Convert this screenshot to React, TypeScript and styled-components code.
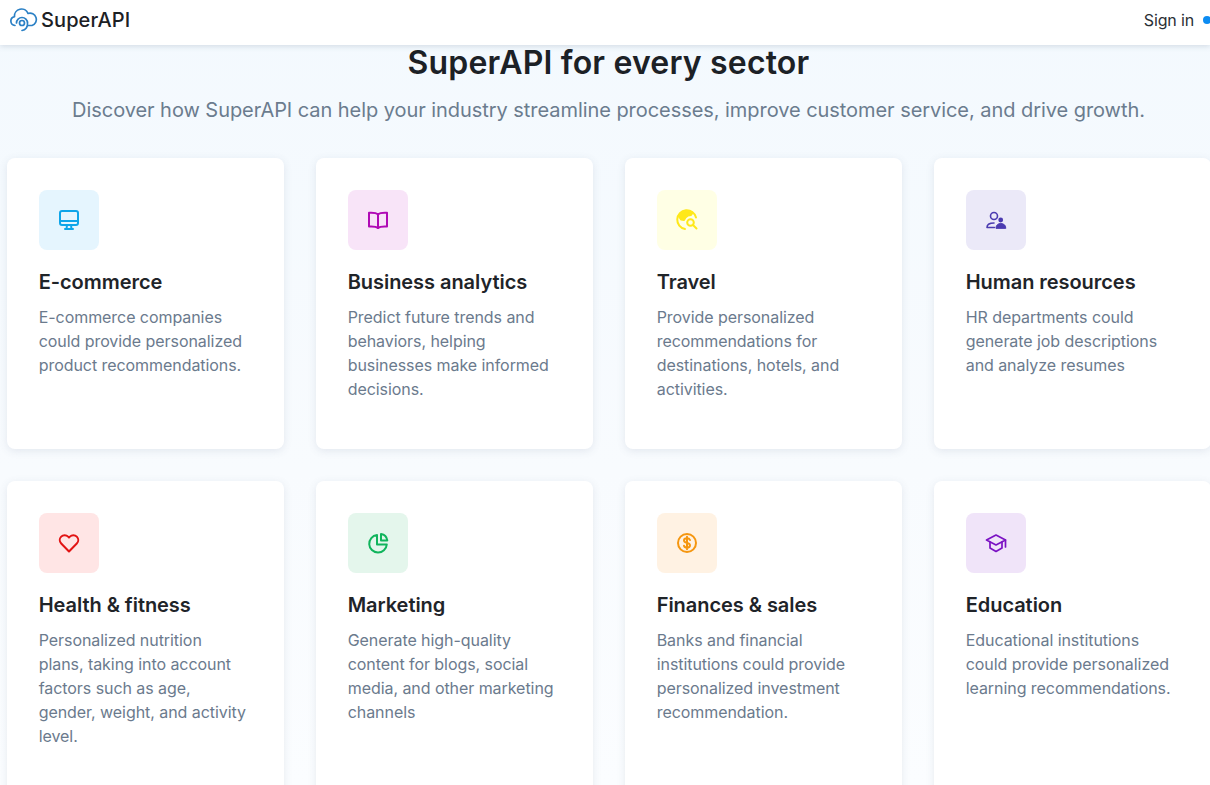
import { ReactNode } from 'react';
import styled, { createGlobalStyle } from 'styled-components';

const GlobalStyle = createGlobalStyle`
  html, body {
    margin: 0;
    padding: 0;
    height: 100%;
    overflow: hidden;
    background: #fff;
    font-family: Inter, "Liberation Sans", sans-serif;
  }
`;

const Page = styled.div`
  width: 1210px;
  height: 785px;
  overflow: hidden;
  display: flex;
  flex-direction: column;
  background: linear-gradient(180deg, #f3f9fe 0%, #f8fbfe 60%, #fbfdff 100%);
`;

const Header = styled.header`
  flex: none;
  height: 45px;
  display: flex;
  align-items: center;
  justify-content: space-between;
  padding: 0 0 0 10px;
  background: #fff;
  box-shadow: 0 1px 6px rgba(60, 80, 110, 0.2);
  position: relative;
  z-index: 1;
`;

const Brand = styled.div`
  display: flex;
  align-items: center;
  gap: 3px;
  margin-top: -5px;
  font-size: 20px;
  font-weight: 500;
  letter-spacing: 0.1px;
  color: #1c2024;
`;

const SignIn = styled.div`
  display: flex;
  align-items: center;
  gap: 9px;
  margin-right: -1px;
  margin-top: -5px;
  font-size: 16px;
  letter-spacing: -0.15px;
  color: #2a2f35;
`;

const Dot = styled.span`
  width: 8px;
  height: 8px;
  border-radius: 50%;
  background: #0d8cf2;
`;

const Title = styled.h1`
  margin: 1px 0 0;
  width: 1217px;
  text-align: center;
  font-size: 32px;
  line-height: 34px;
  font-weight: 600;
  letter-spacing: 0.18px;
  color: #1c2126;
`;

const Subtitle = styled.p`
  margin: 15px 0 0;
  width: 1217px;
  text-align: center;
  font-size: 20px;
  line-height: 30px;
  letter-spacing: -0.055px;
  color: #6b7c8e;
`;

const Grid = styled.div`
  display: grid;
  grid-template-columns: repeat(4, 277px);
  gap: 32px;
  margin: 33px 0 0 7px;
`;

const Card = styled.article`
  box-sizing: border-box;
  padding: 32px 34px 48px 32px;
  background: #fff;
  border-radius: 8px;
  box-shadow: 0 2px 8px rgba(70, 90, 120, 0.12);
`;

const IconBox = styled.div<{ $bg: string; $fg: string }>`
  width: 60px;
  height: 60px;
  border-radius: 8px;
  display: flex;
  align-items: center;
  justify-content: center;
  background: ${(p) => p.$bg};
  color: ${(p) => p.$fg};
`;

const CardTitle = styled.h3`
  margin: 18px 0 0 -0.3px;
  font-size: 20px;
  line-height: 28px;
  font-weight: 600;
  letter-spacing: -0.05px;
  color: #1f2429;
`;

const CardText = styled.p`
  margin: 9px 0 0 -0.3px;
  font-size: 16px;
  line-height: 24px;
  letter-spacing: -0.06px;
  color: #6b7a8d;
`;

const Glyph = ({ children, weight = 2 }: { children: ReactNode; weight?: number }) => (
  <svg width="24" height="24" viewBox="0 0 24 24" fill="none" stroke="currentColor" strokeWidth={weight} strokeLinecap="round" strokeLinejoin="round">
    {children}
  </svg>
);

const Logo = () => (
  <svg width="28" height="26" viewBox="0 0 28 26" fill="none" stroke="#2b80c5" strokeWidth="1.7" strokeLinecap="round" strokeLinejoin="round">
    <path d="M5 18.500A4.500 4.500 0 0 1 4.500 9.600 7 7 0 0 1 18 6.500 6 6 0 0 1 22 18.500H18.500" />
    <path d="M6.500 16a5.500 5.500 0 0 1 11 0 6.500 6.500 0 0 1-5.500 7.500" />
    <circle cx="12" cy="16" r="2.500" />
  </svg>
);

const sectors: { title: string; text: string; bg: string; fg: string; icon: ReactNode }[] = [
  {
    title: 'E-commerce',
    text: 'E-commerce companies could provide personalized product recommendations.',
    bg: '#e5f5fe',
    fg: '#0ea5e9',
    icon: (
      <Glyph>
        <rect x="3" y="3" width="18" height="14" rx="2" />
        <path d="M3 13h18M10 17l-.5 4M14 17l.5 4M8 21h8" />
      </Glyph>
    ),
  },
  {
    title: 'Business analytics',
    text: 'Predict future trends and behaviors, helping businesses make informed decisions.',
    bg: '#f8e4f8',
    fg: '#b00ab5',
    icon: (
      <Glyph>
        <path d="M12 6.500C10.500 5 8 4.500 3 4.800V18.500c5-.3 7.500.2 9 1.500 1.500-1.300 4-1.800 9-1.500V4.800C16 4.500 13.500 5 12 6.500Z" />
        <path d="M12 6.500V20" />
      </Glyph>
    ),
  },
  {
    title: 'Travel',
    text: 'Provide personalized recommendations for destinations, hotels, and activities.',
    bg: '#ffffe5',
    fg: '#ffe81a',
    icon: (
      <Glyph>
        <path d="M21 9.500A9.500 9.500 0 1 0 10 21" />
        <path fill="currentColor" d="M4 7.500 9 3.500c3-.8 6-.5 8.500 1.500L16 7l-3 .5-2.500 2L9 12l-3-.5L4.500 9Z" />
        <circle cx="15.500" cy="14.500" r="3.300" />
        <path d="m18 17 3.500 3.500" />
      </Glyph>
    ),
  },
  {
    title: 'Human resources',
    text: 'HR departments could generate job descriptions and analyze resumes',
    bg: '#ebe9f8',
    fg: '#4b3bb0',
    icon: (
      <Glyph weight={1.6}>
        <circle cx="10" cy="8" r="3.500" />
        <path d="M3 19.500c0-2.800 3-4.500 7-4.500M3 19.500h7.500" />
        <circle cx="16.700" cy="12" r="1.600" fill="currentColor" />
        <path fill="currentColor" strokeWidth="1" d="M12 20c0-2.800 2-4.500 4.800-4.500s5 1.700 5 4.500Z" />
      </Glyph>
    ),
  },
  {
    title: 'Health & fitness',
    text: 'Personalized nutrition plans, taking into account factors such as age, gender, weight, and activity level.',
    bg: '#ffe5e5',
    fg: '#e21414',
    icon: (
      <Glyph>
        <path d="M12 20.500 4.200 12.500a4.900 4.900 0 0 1 0-6.900 4.800 4.800 0 0 1 6.900 0l.9.900.9-.9a4.800 4.800 0 0 1 6.900 0 4.900 4.900 0 0 1 0 6.900Z" />
      </Glyph>
    ),
  },
  {
    title: 'Marketing',
    text: 'Generate high-quality content for blogs, social media, and other marketing channels',
    bg: '#e4f6ec',
    fg: '#10b45c',
    icon: (
      <Glyph>
        <path d="M11 4a8.800 8.800 0 1 0 9.800 9.500H11Z" />
        <path d="M15 3c3.300.4 5.800 3 6.300 6.500H15Z" />
      </Glyph>
    ),
  },
  {
    title: 'Finances & sales',
    text: 'Banks and financial institutions could provide personalized investment recommendation.',
    bg: '#fff2e3',
    fg: '#f5960f',
    icon: (
      <Glyph>
        <circle cx="12" cy="12" r="9" />
        <path d="M15 9c-.4-1-1.500-1.800-3-1.800-1.800 0-3 1-3 2.300 0 3.200 6 1.600 6 4.800 0 1.400-1.300 2.400-3 2.400-1.600 0-2.700-.8-3-1.900M12 5.800v12.400" />
      </Glyph>
    ),
  },
  {
    title: 'Education',
    text: 'Educational institutions could provide personalized learning recommendations.',
    bg: '#f0e4f9',
    fg: '#7b12c4',
    icon: (
      <Glyph weight={1.7}>
        <path d="M12 4 2.500 9 12 14l9.500-5Z" />
        <path d="M6 11v6l6 3.500 6-3.500v-6M21.500 9v7" />
      </Glyph>
    ),
  },
];

export default function App() {
  return (
    <Page>
      <GlobalStyle />
      <Header>
        <Brand>
          <Logo />
          SuperAPI
        </Brand>
        <SignIn>
          Sign in
          <Dot />
        </SignIn>
      </Header>
      <Title>SuperAPI for every sector</Title>
      <Subtitle>Discover how SuperAPI can help your industry streamline processes, improve customer service, and drive growth.</Subtitle>
      <Grid>
        {sectors.map((s) => (
          <Card key={s.title}>
            <IconBox $bg={s.bg} $fg={s.fg}>{s.icon}</IconBox>
            <CardTitle>{s.title}</CardTitle>
            <CardText>{s.text}</CardText>
          </Card>
        ))}
      </Grid>
    </Page>
  );
}
